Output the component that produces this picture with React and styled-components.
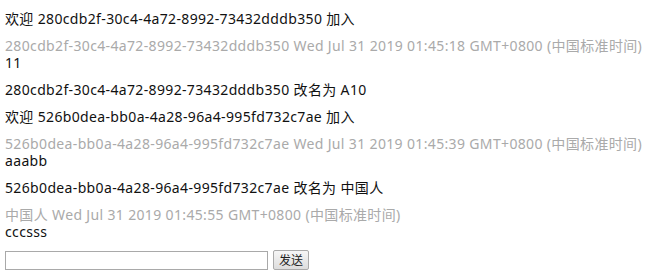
import React from "react";
import styled, { createGlobalStyle } from "styled-components";

const GlobalStyle = createGlobalStyle`
  body {
    margin: 0;
    background: #fff;
    font-family: "Noto Sans", "Noto Sans CJK SC", sans-serif;
    font-size: 14px;
    color: #111;
  }
`;

const Page = styled.div`
  padding: 10px 5px 0;
`;

const Notice = styled.div`
  line-height: 17px;
  letter-spacing: 0.35px;
  margin-bottom: 10px;
`;

const Message = styled.div`
  line-height: 17px;
  letter-spacing: 0.35px;
  margin-bottom: 10px;
`;

const Meta = styled.div`
  color: #aaa;
`;

const Composer = styled.div`
  display: flex;
  align-items: center;
  gap: 5px;
  margin-top: 9px;
`;

const Input = styled.input`
  width: 263px;
  height: 19px;
  box-sizing: border-box;
  border: 1px solid #a9a9a9;
  padding: 0 3px;
  font: inherit;
  outline: none;
`;

const SendButton = styled.button`
  height: 20px;
  width: 36px;
  padding: 0;
  box-sizing: border-box;
  border: 1px solid #aaa;
  border-radius: 2px;
  background: linear-gradient(#f6f6f6, #dddddd);
  font-family: "Noto Sans CJK SC", sans-serif;
  font-size: 12px;
  color: #222;
  line-height: 18px;
`;

const feed = [
  { kind: "notice", text: "欢迎 280cdb2f-30c4-4a72-8992-73432dddb350 加入" },
  {
    kind: "message",
    meta: "280cdb2f-30c4-4a72-8992-73432dddb350 Wed Jul 31 2019 01:45:18 GMT+0800 (中国标准时间)",
    text: "11",
  },
  { kind: "notice", text: "280cdb2f-30c4-4a72-8992-73432dddb350 改名为 A10" },
  { kind: "notice", text: "欢迎 526b0dea-bb0a-4a28-96a4-995fd732c7ae 加入" },
  {
    kind: "message",
    meta: "526b0dea-bb0a-4a28-96a4-995fd732c7ae Wed Jul 31 2019 01:45:39 GMT+0800 (中国标准时间)",
    text: "aaabb",
  },
  { kind: "notice", text: "526b0dea-bb0a-4a28-96a4-995fd732c7ae 改名为 中国人" },
  {
    kind: "message",
    meta: "中国人 Wed Jul 31 2019 01:45:55 GMT+0800 (中国标准时间)",
    text: "cccsss",
  },
];

export default function App() {
  return (
    <>
      <GlobalStyle />
      <Page>
        {feed.map((item, i) =>
          item.kind === "notice" ? (
            <Notice key={i}>{item.text}</Notice>
          ) : (
            <Message key={i}>
              <Meta>{item.meta}</Meta>
              <div>{item.text}</div>
            </Message>
          )
        )}
        <Composer>
          <Input type="text" />
          <SendButton>发送</SendButton>
        </Composer>
      </Page>
    </>
  );
}
